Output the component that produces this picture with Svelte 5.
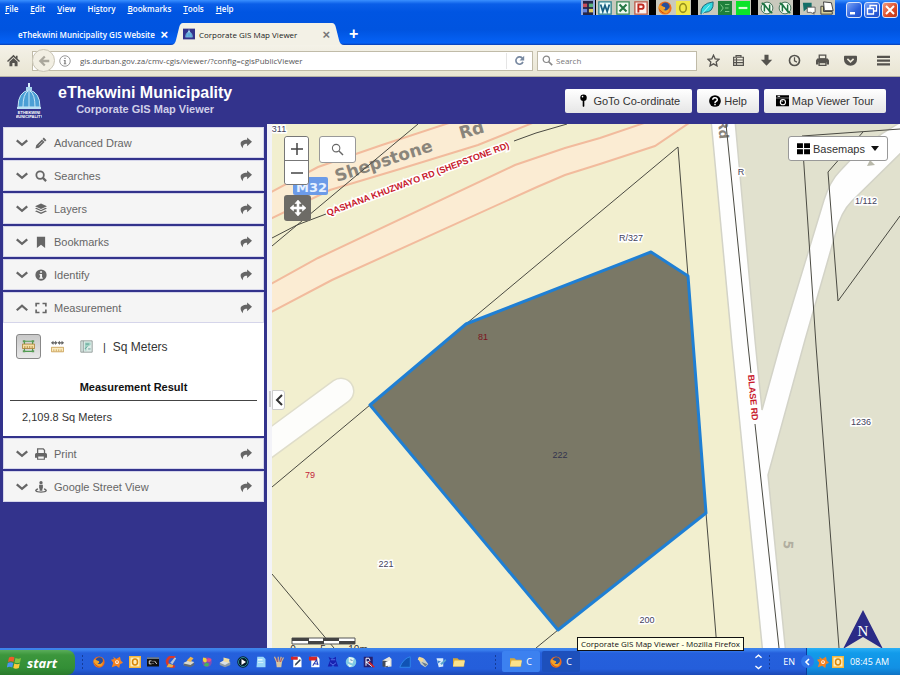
<script>
  const icons = {
    home: '<path d="M8 1 0 8.6l1.2 1.2L8 3.600l6.800 6.200L16 8.600 13 5.800V2h-2v2z"/><path d="M8 5 3 9.600V15h3.600v-4h2.800v4H13V9.600z"/>',
    back: '<path d="M8 2 2 8l6 6 1.800-1.800L7 9.400h7V6.600H7l2.800-2.800z"/>',
    info: '<circle cx="8" cy="8" r="7" fill="none" stroke="currentColor"/><path d="M7.200 3.600h1.600v1.700H7.200zM6.300 6.700h2.500v4.600h1v.9H6.300v-.9h.9V7.600h-.9z"/>',
    reload: '<path d="M12.500 5.200A5.300 5.300 0 1 0 13 10" fill="none" stroke="currentColor" stroke-width="2.400"/><path d="M14.800 1v7H8z"/>',
    lens: '<circle cx="6.300" cy="6.300" r="4.600" fill="none" stroke="currentColor" stroke-width="1.800"/><path d="m9.800 9.800 5 5" stroke="currentColor" stroke-width="2.400"/>',
    thinlens: '<circle cx="6.300" cy="6.300" r="4.600" fill="none" stroke="currentColor" stroke-width="1.300"/><path d="m9.800 9.800 5 5" stroke="currentColor" stroke-width="1.700"/>',
    star: '<path d="m8 1.500 2 4.500 4.900.5-3.600 3.300 1 4.800L8 12.100l-4.300 2.500 1-4.800L1.100 6.500 6 6z" fill="none" stroke="currentColor" stroke-width="1.600"/>',
    list: '<path d="M2 4h12v10H2zM5 4V2h6v2M2 7.400h12M2 10.700h12M5.500 5v9" fill="none" stroke="currentColor" stroke-width="1.500"/>',
    down: '<path d="M5.500 1h5v6H15l-7 7.500L1 7h4.500z"/>',
    clock: '<circle cx="8" cy="8" r="6.200" fill="none" stroke="currentColor" stroke-width="2"/><path d="M8 4v4.500l3 1.500" fill="none" stroke="currentColor" stroke-width="1.500"/>',
    printer: '<path d="M4 1.500h8V6H4z" fill="none" stroke="currentColor" stroke-width="1.600"/><path d="M1.500 5.500h13L16 8v5h-3v-3H3v3H0V8z"/><path d="M3.800 10.500h8.400V14H3.800z" fill="none" stroke="currentColor" stroke-width="1.600"/>',
    pocket: '<path d="M1 2h14a1 1 0 0 1 1 1v4a8 7.500 0 0 1-16 0V3a1 1 0 0 1 1-1z"/><path d="m4.200 6 3.800 3.600L11.800 6" fill="none" stroke="#eeeadb" stroke-width="2"/>',
    menu: '<path d="M0 2h16v2.800H0zM0 6.700h16v2.800H0zM0 11.400h16v2.800H0z"/>',
    pin: '<circle cx="8" cy="4.500" r="4"/><path d="M7 7h2v8l-1 1-1-1z"/><circle cx="6.800" cy="3.300" r="1" fill="#fff"/>',
    help: '<circle cx="8" cy="8" r="7.800"/><path d="M5 6.300a3 2.700 0 1 1 4.200 2.400Q8 9.200 8 10.500" fill="none" stroke="#fff" stroke-width="2"/><path d="M7 11.500h2v2H7z" fill="#fff"/>',
    camera: '<path d="M0 1.500h16v3H0zM0 5.300h16V15H0z"/><path d="M2 2.300h3v1.200H2z" fill="#fff"/><circle cx="8.500" cy="10" r="3.200" fill="none" stroke="#fff" stroke-width="1.300"/><path d="M7 10a1.500 1.500 0 0 1 1.500-1.500" stroke="#fff" fill="none"/>',
    chevdown: '<path d="m1 4.500 7 6 7-6" fill="none" stroke="currentColor" stroke-width="3"/>',
    chevup: '<path d="m1 11 7-6 7 6" fill="none" stroke="currentColor" stroke-width="3"/>',
    share: '<path d="M9.500.5 16 6.300l-6.500 6V9C6 8.800 4 10 3.800 15-1 10-.5 3.800 9.500 3.800z"/>',
    pencil: '<path d="m11.700.8 3.500 3.500-1.700 1.700L10 2.500zM9.300 3.200l3.500 3.500-7.700 7.700L.6 15.400l1-4.500z"/><path d="m5 11.200 5-5" stroke="#f5f5f5" stroke-width=".8"/>',
    search: '<circle cx="6.800" cy="6.800" r="5" fill="none" stroke="currentColor" stroke-width="2.400"/><path d="m10.500 10.500 4.300 4.300" stroke="currentColor" stroke-width="3"/>',
    layers: '<path d="m8 .5 8 3.700-8 3.700L0 4.200z"/><path d="m0 7.300 2-.9 6 2.800 6-2.800 2 .9-8 3.700z"/><path d="m0 10.900 2-.9 6 2.800 6-2.800 2 .9-8 3.700z"/>',
    bookmark: '<path d="M2.500 1h11v15L8 11.500 2.500 16z"/>',
    identify: '<circle cx="8" cy="8" r="7.500"/><path d="M6.800 3h2.600v2H6.800zM6 6.500h3.400v4.700h1V13H5.800v-1.800h1V8.300H6z" fill="#f5f5f5"/>',
    expand: '<path d="M1.500 6V2H6M10 2h4.500v4M14.500 10v4H10M6 14H1.500v-4" fill="none" stroke="currentColor" stroke-width="2.200"/>',
    print: '<path d="M3.500 7V1.200H11L12.700 3v4" fill="none" stroke="currentColor" stroke-width="1.700"/><path d="M2 6.500h12a2 2 0 0 1 2 2V13h-3v-2.500H3V13H0V8.500a2 2 0 0 1 2-2z"/><path d="M3.500 10.500h9V15h-9z" fill="none" stroke="currentColor" stroke-width="1.600"/>',
    street: '<circle cx="8" cy="2.200" r="2.200"/><path d="M5.500 5h5v5H9.800v3H6.200v-3h-.7z"/><path d="M4 10.500C-1 12 .5 14.800 8 14.800s9-2.800 4-4.300" fill="none" stroke="currentColor" stroke-width="1.800"/>',
    area: '<path d="M2 1.500h12M3 1v13M13 1v13M2 14h12" stroke="#4f9e4f" stroke-width="1.400" fill="none"/><path d="M.5 5h15v5.500H.5z" fill="#f4e0a4" stroke="#a87b32"/><path d="M3.500 10V7.500m3 2.500V7.500m3 2.500V7.500m3 2.500V7.500" stroke="#a87b32"/><path d="M1 .3h3v2.500H1zm11 0h3v2.500h-3zM1 12.500h3V15H1zm11 0h3V15h-3z" fill="#5b9a58"/>',
    distance: '<path d="M1 3.500h5.500M9.500 3.500H15" stroke="#555" stroke-width="1.500"/><path d="M3 .8v5.400L0 3.500zm2 0v5.400l3-2.700zm6 0v5.400L8 3.500zm2 0v5.400l3-2.700z" fill="#666"/><path d="M.5 9h15v5.500H.5z" fill="#faebc0" stroke="#c69a4c"/><path d="M3.500 14v-2.500m3 2.500v-2.500m3 2.500v-2.500m3 2.500v-2.500" stroke="#c69a4c"/>',
    location: '<path d="M1 1h14v14H1z" fill="#dcebe7" stroke="#87918f"/><path d="M4 1v14" stroke="#87918f"/><path d="M6 3h7v3L8 9v4H6z" fill="#9ed3c2"/><path d="M6 11l3-3m-2-3h4m-1 6h3" stroke="#538f8b"/>',
    move: '<path d="m8 0 3 3.500H9V7h3.500V5L16 8l-3.500 3V9H9v3.500h2L8 16l-3-3.500h2V9H3.500v2L0 8l3.500-3v2H7V3.500H5z" stroke="currentColor" stroke-width=".6"/>',
    tiles: '<path d="M0 1.500h7.300v6H0zm8.700 0H16v6H8.700zM0 9h7.300v6H0zm8.700 0H16v6H8.700z"/>',
    firefox: '<circle cx="8" cy="8" r="7.500" fill="#ef6c1a"/><circle cx="8.500" cy="6.500" r="4.800" fill="#274f9b"/><path d="M1 5c2-1 4 1 7 2 1 2-1 3-2 3 3 2 6 0 7-3 1 5-3 8-6 7.500C2 14 0 9 1 5z" fill="#f3a229"/><path d="M1 8c1 5 5 7 9 6-5 0-7-3-9-6z" fill="#c9310f"/>',
    avast: '<path d="m3 1 4 3 5-3 1 5 3 3-4 2-1 5-4-3-6 2 2-6-3-4 4-1z" fill="#f58220"/><circle cx="8" cy="8" r="2.500" fill="#fff"/><circle cx="8" cy="8" r="1.200" fill="#f58220"/>',
    outlook: '<path d="M0 0h16v16H0z" fill="#f6b73c"/><path d="M2 2h12v12H2z" fill="#fdebb8"/><ellipse cx="8" cy="8" rx="3.300" ry="4" fill="none" stroke="#d98709" stroke-width="2"/>',
    cmd: '<path d="M0 2h16v12H0z" fill="#111"/><path d="M0 2h16v1.600H0z" fill="#9ab"/><path d="M6 6.500H3v4h3M8 6.500v1m0 2v1m2-4 3 4" fill="none" stroke="#eee" stroke-width="1.200"/>',
    cleaner: '<path d="M13 2a6.500 6.500 0 1 0 0 11" fill="none" stroke="#d8382a" stroke-width="3.600"/><path d="m7 9 6-7 2 1-5 8z" fill="#b8c4d8"/><path d="m5 10 6 2-1 3H2z" fill="#e8b04a"/>',
    scanner: '<path d="m1 9 6-3 8 2-5 5-9-1z" fill="#d9d9cf"/><path d="m1 10 9 2 5-3v3l-5 3-9-2z" fill="#626a73"/><path d="m5 6 5-5 4 2-4 5z" fill="#f2b44a"/>',
    swirl: '<circle cx="8" cy="8" r="6.500" fill="#7a51b8"/><path d="M3 2c5 0 6 4 4 6S1 7 3 2z" fill="#f3d13b"/><path d="M14 4c0 4-4 5-6 3s2-6 6-3z" fill="#e14b8c"/><path d="M4 13c0-4 4-5 6-3s-1 6-6 3z" fill="#45b35e"/>',
    disk: '<path d="m1 9 7-4 7 3v4l-7 3-7-3z" fill="#8d9aa5"/><path d="m1 9 7 3 7-4-7-3z" fill="#d9e0e6"/><path d="m6 2 8 2-1 5-7-2z" fill="#f0dca0"/>',
    play: '<circle cx="8" cy="8" r="7.600" fill="#061826"/><circle cx="8" cy="8" r="6" fill="none" stroke="#37adbd"/><path d="m6 4 6 4-6 4z" fill="#fff"/>',
    note: '<path d="M3 1h8l3 3v11H2z" fill="#9bd8fb"/><path d="M4 4h6v2H4zm0 4h7v1H4z" fill="#e4f6ff"/>',
    brushes: '<path d="M4 8h8l-1 7H5z" fill="#d8c5a0"/><path d="m5 8-3-7m5 7V1m2 7 2-7m0 7 3-6" stroke="#d9b48a" stroke-width="1.600"/><path d="m6 8-1-5m5 5 1-5" stroke="#d44c35"/>',
    pdf: '<path d="M3 1h9l2 3v11H3z" fill="#fff"/><path d="M0 1h11v5H0z" fill="#d72626"/><path d="m5 13 5-8 2 7M6 10l6 1" fill="none" stroke="#2a3fb5" stroke-width="1.500"/>',
    pdfedit: '<path d="M3 1h9l2 3v11H3z" fill="#fff"/><path d="M0 1h9v4H0z" fill="#d72626"/><path d="m5 13 1-3 6-6 1 2-6 6z" fill="#345"/>',
    gear: '<path d="m2 1 5 3 5-3v5l3 8h-5l-2-2-2 2H1l3-8z" fill="#1722b2"/><path d="m4 9 4 3 4-3M5 5h6" stroke="#6a87f8" fill="none"/>',
    globe: '<circle cx="8" cy="8" r="7" fill="#81cbe5"/><path d="m5 1 7 2-2 7-5-2zM3 10l7 3-4 2z" fill="#e7f5f4"/><path d="m7 5 3 1" stroke="#27639f"/>',
    app: '<path d="M1 1h12v14H1z" fill="#26206f"/><path d="M4 13V3h4q3 3-1 5H4l8 6" fill="none" stroke="#fff" stroke-width="1.300"/><path d="m8 8 7 7" stroke="#d22" stroke-width="2"/>',
    papers: '<path d="m2 6 9-5 3 3v10l-9 1z" fill="#e7e5dc"/><path d="m2 6 7 1v8l-7-1z" fill="#444b59"/><path d="m6 8 6-2v6l-6 2z" fill="#fff"/>',
    fin: '<path d="M15 1v14H1Q6 3 15 1z" fill="#1053b4"/><path d="M15 1v14H1Q6 3 15 1z" fill="none" stroke="#3493f4"/>',
    tools: '<path d="m1 2 9 2 5 7-4 4-6-4z" fill="#c9cec5"/><path d="m3 1 6 2-2 5-6-3z" fill="#f4d893"/><path d="m6 8 8 3-3 3z" fill="#677a8c"/>',
    writer: '<path d="M2 3h9v11l-6 1z" fill="#d9eafa"/><path d="m7 10 7-6 1 2-6 6z" fill="#58a5ce"/><path d="m3 6 5 1-4 3z" fill="#488bd1"/>',
    folder: '<path d="M0 3h6l2 2h7v9H0z" fill="#d9a836"/><path d="M2 6h14l-2 8H0z" fill="#fbe28c"/>',
    grid: '<path d="M0 0h16v16H0z" fill="#252547"/><path d="M2 3h5v4H2z" fill="#c84d5a"/><path d="M9 3h5v4H9z" fill="#5bb27e"/><path d="M2 9h5v4H2z" fill="#6784dd"/><path d="M9 9h5v4H9z" fill="#e0c95d"/>',
    word: '<path d="M1 1h14v14H1z" fill="#eafcfc" stroke="#2b7f8c" stroke-width="1.500"/><path d="m3 4 2.500 8L8 5l2.500 7L13 4" fill="none" stroke="#195f83" stroke-width="2"/>',
    excel: '<path d="M1 1h14v14H1z" fill="#effaf0" stroke="#3b8855" stroke-width="1.500"/><path d="m4 4 8 8m0-8-8 8" stroke="#257744" stroke-width="2.400"/>',
    power: '<path d="M1 1h14v14H1z" fill="#fdf1ed" stroke="#b95a49" stroke-width="1.500"/><path d="M5 13V4h3.500a2.300 2.300 0 0 1 0 5H5" fill="none" stroke="#be2a20" stroke-width="2.200"/>',
    ring: '<path d="M0 0h16v16H0z" fill="#f1e84a"/><ellipse cx="8" cy="8" rx="3.800" ry="5" fill="none" stroke="#98911c" stroke-width="1.800"/>',
    leaf: '<path d="M1 15Q0 3 15 1q1 12-10 12z" fill="#32d7e0" stroke="#125b70"/><path d="m2 15 9-10" stroke="#c1ffff"/>',
    board: '<path d="M0 0h16v16H0z" fill="#1e803c"/><path d="m3 4 3 4-3 4m5-8h5M8 8h4m-4 4h5" fill="none" stroke="#8ad293"/>',
    green: '<path d="M0 0h16v16H0z" fill="#0be42a"/><path d="M3 8h10" stroke="#d5ffd5" stroke-width="2.500"/>',
    compass: '<circle cx="8" cy="8" r="6.700" fill="#f3fbf3" stroke="#34664d"/><path d="M5 12V4l6 8V4M2 2l12 12" fill="none" stroke="#1b7443" stroke-width="1.700"/>',
    chat: '<path d="M1 2h10v7H5l-3 3z" fill="#146f68"/><path d="M6 7h9v6h-2l1 2-4-2H6z" fill="#fff" stroke="#555"/>',
    sheets: '<path d="m4 1 9 1 2 9H5z" fill="#fff" stroke="#333"/><path d="M1 6h3v6h10v3H1z" fill="#d6d09a" stroke="#333"/>'
  };

  const menus = ['File', 'Edit', 'View', 'History', 'Bookmarks', 'Tools', 'Help'];
  const keyAt = [0, 0, 0, 2, 0, 0, 0];
  const launchers = [['grid'], ['word', 'excel', 'power'], ['firefox', 'ring'], ['leaf', 'board', 'green'], ['compass', 'compass'], ['chat', 'sheets']];
  const tools = ['list', 'down', 'clock', 'printer', 'pocket'];
  const toolNames = ['Bookmarks list', 'Downloads', 'Recent history', 'Print page', 'Save to Pocket'];
  const top = [['pencil', 'Advanced Draw'], ['search', 'Searches'], ['layers', 'Layers'], ['bookmark', 'Bookmarks'], ['identify', 'Identify']];
  const bottom = [['print', 'Print'], ['street', 'Google Street View']];
  const quick = ['firefox', 'avast', 'outlook', 'cmd', 'cleaner', 'scanner', 'swirl', 'disk', 'play', 'note', 'brushes', 'pdfedit', 'pdf', 'gear', 'globe', 'app', 'papers', 'fin', 'tools', 'writer', 'folder'];
  let url = $state('gis.durban.gov.za/cmv-cgis/viewer/?config=cgisPublicViewer');
</script>

{#snippet icon(name, size = 12)}
  <svg class="icon" width={size} height={size} viewBox="0 0 16 16" fill="currentColor" aria-hidden="true">{@html icons[name]}</svg>
{/snippet}

{#snippet dome()}
  <path d="M12 0h2v4h-2z" fill="#d9eefa" />
  <path d="M10 4h6v4h-6z" fill="#a8d6ef" />
  <path d="M2 24Q2 9 13 7q11 2 11 17z" fill="#4b9fd5" stroke="#c6e5f6" />
  <path d="M7 24q0-13 5-16m7 16q0-13-5-16m-1 0v16" fill="none" stroke="#c6e5f6" />
{/snippet}

{#snippet pane(glyph, label, open = false)}
  <div class="pane-head">
    <button class="toggle" aria-expanded={open}>
      {@render icon(open ? 'chevup' : 'chevdown', 12)}
      {@render icon(glyph, 12)}
      <span>{label}</span>
    </button>
    <button class="pop" aria-label={`Detach ${label}`}>{@render icon('share', 12)}</button>
  </div>
{/snippet}

<div class="screen">
  <div class="chrome">
    <div class="menubar">
      <nav>
        {#each menus as m, i}
          <button>{m.slice(0, keyAt[i])}<u>{m[keyAt[i]]}</u>{m.slice(keyAt[i] + 1)}</button>
        {/each}
      </nav>
      <div class="launchbar">
        {#each launchers as group}
          <div class="group">
            {#each group as g}<button aria-label={g}>{@render icon(g, 14)}</button>{/each}
          </div>
        {/each}
      </div>
      <div class="winbtns">
        <button aria-label="Minimise"><svg width="12" height="12" viewBox="0 0 12 12"><path d="M2 8h5v2.500H2z" fill="#fff" /></svg></button>
        <button aria-label="Restore"><svg width="12" height="12" viewBox="0 0 12 12"><path d="M4 4V1.500h6.500V7H8M1.500 4.500H7.500V10h-6z" fill="none" stroke="#fff" stroke-width="1.300" /></svg></button>
        <button class="close" aria-label="Close"><svg width="12" height="12" viewBox="0 0 12 12"><path d="m2 2 8 8m0-8-8 8" stroke="#fff" stroke-width="2" /></svg></button>
      </div>
    </div>
    <div class="tabs">
      <div class="tab idle"><a href="#site">eThekwini Municipality GIS Website</a><button aria-label="Close tab">×</button></div>
      <div class="tab active">
        <svg class="curve left" width="12" height="22" viewBox="0 0 12 22"><path d="M0 22Q4 22 5 17L8 5q1-5 4-5v22z" fill="#f3f1e6" /></svg>
        <svg width="12" height="12" viewBox="-6 -3 38 34"><path d="M-6-3h38v34H-6z" fill="#33338c" />{@render dome()}</svg>
        <a href="#viewer">Corporate GIS Map Viewer</a><button aria-label="Close tab">×</button>
        <svg class="curve right" width="12" height="22" viewBox="0 0 12 22"><path d="M12 22Q8 22 7 17L4 5Q3 0 0 0v22z" fill="#f3f1e6" /></svg>
      </div>
      <button class="newtab" aria-label="New tab">+</button>
    </div>
  </div>

  <div class="toolbar">
    <button class="home" aria-label="Home">{@render icon('home', 13)}</button>
    <div class="address">
      <button class="back" aria-label="Back">{@render icon('back', 14)}</button>
      <button class="site" aria-label="Site information">{@render icon('info', 12)}</button>
      <input class="url" aria-label="Address" bind:value={url} />
      <button class="reload" aria-label="Reload">{@render icon('reload', 11)}</button>
    </div>
    <label class="find">{@render icon('lens', 11)}<input aria-label="Search" placeholder="Search" /></label>
    <button class="tool star" aria-label="Bookmark this page">{@render icon('star', 13)}</button>
    {#each tools as t, i}
      <button class="tool" aria-label={toolNames[i]}>{@render icon(t, 13)}</button>
    {/each}
    <button class="tool burger" aria-label="Open menu">{@render icon('menu', 13)}</button>
  </div>

  <header>
    <svg class="logo" width="26" height="36" viewBox="0 0 26 36" aria-hidden="true">
      {@render dome()}
      <path d="M1 24h24v2H1z" fill="#b9dff3" />
      <text x="13" y="31">ETHEKWINI</text>
      <text x="13" y="35">MUNICIPALITY</text>
    </svg>
    <div class="titles">
      <h1>eThekwini Municipality</h1>
      <p>Corporate GIS Map Viewer</p>
    </div>
    <div class="actions">
      <button>{@render icon('pin', 13)}GoTo Co-ordinate</button>
      <button>{@render icon('help', 12)}Help</button>
      <button>{@render icon('camera', 13)}Map Viewer Tour</button>
    </div>
  </header>

  <main>
    <aside>
      {#each top as [g, l]}<section>{@render pane(g, l)}</section>{/each}
      <section>
        {@render pane('expand', 'Measurement', true)}
        <div class="measure">
          <div class="modes">
            <button class="on" aria-label="Area" aria-pressed="true">{@render icon('area', 13)}</button>
            <button aria-label="Distance">{@render icon('distance', 13)}</button>
            <button aria-label="Location">{@render icon('location', 13)}</button>
            <span>|</span>
            <button class="unit" aria-haspopup="menu">Sq Meters</button>
          </div>
          <h2>Measurement Result</h2>
          <output>2,109.8 Sq Meters</output>
        </div>
      </section>
      {#each bottom as [g, l]}<section>{@render pane(g, l)}</section>{/each}
    </aside>
    <div class="splitter"><i></i></div>

    <div class="map">
      <svg class="canvas" viewBox="272 124 628 524" preserveAspectRatio="xMinYMin slice" role="img" aria-label="Parcel map">
        <path d="M272 124h628v524H272z" fill="#f2efcf" />
        <path d="M724 124h176v524H774z" fill="#e1e1ce" />
        <g fill="#fbecd3" stroke="#f2bb9d" stroke-width="2">
          <path d="M262 197 318 167 382 145 452 122H535L478 145 400 169 330 190 262 223z" />
          <path d="M262 289 318 258 515 165 565 148 600 138 650 121H692L655 146 600 164 565 175 537 187 332 280 262 317z" />
        </g>
        <path d="M262 449 341 391" stroke="#dfddca" stroke-width="27" stroke-linecap="round" />
        <path d="M262 449 341 391" stroke="#fdfdfb" stroke-width="24" stroke-linecap="round" />
        <path d="M711 120 732 345 763 655H786L768 475 805 340 836 232Q841 212 852 201L905 149V120Q868 139 840 171 830 181 824 200L780 345 762 410 755 340 735 120z" fill="#fefefe" stroke="#d3d3c7" stroke-width="1.500" />
        <g class="gray">
          <text font-size="17" transform="translate(337 182) rotate(-18)">Shepstone</text>
          <text font-size="17" transform="translate(461 139) rotate(-16)">Rd</text>
          <text font-size="13" transform="translate(718 120) rotate(85)">Rd</text>
          <text font-size="13" opacity=".55" transform="translate(784 540) rotate(94)">5</text>
        </g>
        <rect x="293" y="177" width="35" height="18" rx="2" fill="#6c9be8" />
        <text class="route" x="296" y="192">M32</text>
        <path d="M867 166l3-6 5 5z" fill="#b9b9aa" />
        <path d="M370 405 466 324 651 252 688 276 706 513 558 630z" fill="#7a7866" />
        <g class="lines">
          <path d="M272 246 418 124M272 238 297 225 326 214M514 141l22-8 31-9" />
          <path d="M466 324 678 147 688 276 706 513 717 648M272 487 370 405M272 574 334 648M536 648 558 630" />
          <path d="M726 124 748 345 751 373M755 424 779 648M802 136 816 345 839 648M802 136 900 129M863 132 828 172 838 301 900 216" />
        </g>
        <path d="M370 405 466 324 651 252 688 276 706 513 558 630z" fill="none" stroke="#1f7fd4" stroke-width="3" stroke-linejoin="round" />
        <g class="street">
          <text transform="translate(328 216) rotate(-20.600)">QASHANA KHUZWAYO RD (SHEPSTONE RD)</text>
          <text transform="translate(748 375) rotate(85)">BLASE RD</text>
        </g>
        <g class="lot">
          <text x="279" y="132">311</text>
          <text x="631" y="241">R/327</text>
          <text x="741" y="175">R</text>
          <text x="866" y="204">1/112</text>
          <text x="861" y="425">1236</text>
          <text x="386" y="567">221</text>
          <text x="647" y="623">200</text>
          <text class="bare" x="560" y="458">222</text>
          <text class="bare dark" x="483" y="340">81</text>
          <text class="bare red" x="310" y="478">79</text>
        </g>
        <path d="M292 638h63v6h-63z" fill="#fff" stroke="#555" />
        <path d="M292 638h17v3h-17zM323 638h16v3h-16zM308 641h16v3h-16zM339 641h16v3h-16z" fill="#444" />
        <g class="scale"><text x="293" y="653">0</text><text x="323" y="653">5</text><text x="358" y="653">10m</text></g>
        <path d="M863 610 883 649 863 637 843 649z" fill="#2b2b86" />
        <text class="north" x="863" y="636">N</text>
      </svg>

      <div class="zoom">
        <button aria-label="Zoom in"><svg width="12" height="12"><path d="M6 0v12M0 6h12" stroke="#444" stroke-width="1.500" /></svg></button>
        <button aria-label="Zoom out"><svg width="12" height="12"><path d="M0 6h12" stroke="#444" stroke-width="1.500" /></svg></button>
      </div>
      <button class="lookup" aria-label="Find place">{@render icon('thinlens', 13)}</button>
      <button class="extent" aria-label="Full extent">{@render icon('move', 16)}</button>
      <button class="basemaps" aria-haspopup="menu">{@render icon('tiles', 13)}Basemaps<i class="caret"></i></button>
      <button class="collapse" aria-label="Collapse sidebar"><svg width="8" height="12" viewBox="0 0 8 12"><path d="M7 1 2 6l5 5" fill="none" stroke="#333" stroke-width="2" /></svg></button>
    </div>
  </main>

  <footer>
    <button class="start">
      <svg width="16" height="14" viewBox="0 0 16 14" aria-hidden="true">
        <path d="M2 1.500q3-1.500 5.500 0L6.500 6Q4 4.600 1 6z" fill="#ef5b2b" /><path d="M8.500 2q3 1.400 5.500 0l-1 4.500q-3 1.200-5.500 0z" fill="#86c440" />
        <path d="M.8 7q3-1.400 5.500 0l-1 4.500q-3-1.500-5.500 0z" fill="#4a95ee" /><path d="M7.300 7.500q3 1.400 5.500 0l-1 4.500q-3 1.400-5.500 0z" fill="#fbcb3a" />
      </svg>
      start
    </button>
    <i class="grip"></i>
    <div class="quick">{#each quick as q}<button aria-label={q}>{@render icon(q, 12)}</button>{/each}</div>
    <i class="grip"></i>
    <button class="task">{@render icon('folder', 12)}C</button>
    <button class="task pressed">{@render icon('firefox', 12)}C</button>
    <div class="scroller"><button aria-label="Scroll up">{@render icon('chevup', 7)}</button><button aria-label="Scroll down">{@render icon('chevdown', 7)}</button></div>
    <i class="grip"></i>
    <span class="lang">EN</span>
    <div class="tray">
      <button class="hide" aria-label="Hide icons"><svg width="6" height="8" viewBox="0 0 6 8"><path d="M5 1 2 4l3 3" fill="none" stroke="#fff" stroke-width="1.600" /></svg></button>
      {@render icon('avast', 12)}{@render icon('outlook', 12)}
      <time>08:45 AM</time>
    </div>
    <div class="tip" role="tooltip">Corporate GIS Map Viewer - Mozilla Firefox</div>
  </footer>
</div>

<style>
  :global(body) { margin: 0; }
  .screen { min-height: 100vh; display: flex; flex-direction: column; font-family: "Liberation Sans", Arial, sans-serif; font-size: 11px; overflow: hidden; }
  button { font: inherit; color: inherit; border: 0; background: none; padding: 0; margin: 0; display: flex; align-items: center; justify-content: center; flex: none; }
  a { color: inherit; text-decoration: none; }
  .icon { display: block; flex: none; }
  .chrome, .toolbar, footer { font-family: "Open Sans", "Noto Sans", sans-serif; font-size: 8px; }

  .chrome { background: linear-gradient(#3a90ff 0, #0a5ee8 4px, #0055e2 12px, #0054e0 30px, #0562f6 43px, #0a3eb0 45px); height: 45px; display: flex; flex-direction: column; justify-content: space-between; }
  .menubar { display: flex; height: 17px; color: #fff; }
  nav { display: flex; flex: 1; gap: 12px; padding-left: 5px; font-size: 8px; font-weight: 600; height: 16px; }
  .launchbar { display: flex; height: 15px; gap: 7px; background: linear-gradient(90deg, #93a8df 14px, #000 14px); padding-left: 2px; }
  .group { display: flex; gap: 1px; background: #c9c9bd; }
  .group button { width: 17px; }
  .group:first-child button { width: 10px; overflow: hidden; background: #8d9cc8; }
  .group:first-child { margin-right: -4px; }
  .winbtns { display: flex; gap: 2px; padding: 2px 2px 0 11px; }
  .winbtns button { width: 16px; height: 16px; box-sizing: border-box; border: 1px solid #d8e4fb; border-radius: 3px; background: linear-gradient(135deg, #7ba4f5, #2a5fdc 60%, #1f4cc4); }
  .winbtns .close { background: linear-gradient(135deg, #f19a7f, #dd4a26 60%, #b9361a); }

  .tabs { display: flex; height: 22px; align-items: stretch; }
  .tab { display: flex; align-items: center; position: relative; }
  .tab a { flex: 1; white-space: nowrap; }
  .tab button { font: bold 13px "Liberation Sans", sans-serif; }
  .idle { width: 150px; padding: 0 8px 0 18px; color: #fff; font-weight: 600; }
  .active { width: 147px; background: #f3f1e6; color: #222; gap: 4px; margin-left: 7px; padding: 0 2px 0 0; }
  .active button { color: #777; }
  .curve { position: absolute; top: 0; }
  .left { right: 100%; }
  .right { left: 100%; }
  .newtab { margin-left: 17px; color: #fff; font: bold 16px "Liberation Sans", sans-serif; }

  .toolbar { display: flex; align-items: center; height: 32px; box-sizing: border-box; padding: 0 9px 0 7px; color: #55534e; background: linear-gradient(#f4f2e8, #e9e5d3); border-bottom: 1px solid #b5b1a5; }
  .home { margin-right: 12px; }
  .address { display: flex; flex: 1; height: 18px; border: 1px solid #c0bba8; background: #fff; align-items: center; margin-right: 4px; }
  .back { width: 23px; height: 23px; border: 1px solid #c9c5b6; border-radius: 50%; background: #f2efe3; color: #aaa79c; margin-left: -1px; }
  .site { padding: 0 9px 0 4px; color: #777; }
  .url { flex: 1; color: #555; }
  input { border: 0; outline: 0; padding: 0; background: none; font: inherit; font-size: 8px; min-width: 0; }
  input::placeholder { color: #777; opacity: 1; }
  .reload { width: 26px; border-left: 1px solid #e5e5e5; height: 16px; color: #7788a0; }
  .find { display: flex; align-items: center; gap: 3px; width: 154px; height: 18px; border: 1px solid #c0bba8; background: #fff; padding-left: 4px; color: #888; margin-right: 9px; }
  .find input { flex: 1; }
  .tool { width: 15px; margin-right: 13px; }
  .star { margin-right: 10px; }
  .burger { margin: 0 0 0 5px; }

  header { display: flex; align-items: center; height: 47px; background: #33338c; color: #fff; padding: 0 14px 0 16px; }
  .logo { flex: none; }
  .logo text { font-size: 4px; font-weight: bold; fill: #fff; text-anchor: middle; }
  .titles { text-align: center; margin-left: 16px; flex: none; }
  h1 { font-size: 16px; line-height: 18px; margin: 0; }
  p { margin: 0; font-size: 11px; line-height: 15px; font-weight: bold; color: #cfcfe8; }
  .actions { display: flex; gap: 5px; margin-left: auto; }
  .actions button { height: 24px; padding: 0 12px; gap: 3px; color: #333; font-size: 11px; background: linear-gradient(#fff, #e6e6e6); border-radius: 2px; }
  .actions .icon { color: #000; }

  main { flex: 1; display: flex; background: #33338c; min-height: 0; }
  aside { width: 261px; flex: none; padding: 3px 3px 0; display: flex; flex-direction: column; gap: 2px; }
  section { background: #fff; }
  .pane-head { display: flex; align-items: center; height: 31px; background: #f5f5f5; border: 1px solid #d5d5ea; box-sizing: border-box; padding: 0 11px 0 12px; color: #666; }
  .toggle { flex: 1; justify-content: flex-start; gap: 7px; }
  .measure { padding: 9px 7px 11px; }
  .modes { display: flex; align-items: center; height: 29px; padding-left: 6px; color: #333; font-size: 12px; }
  .modes button { width: 25px; height: 25px; box-sizing: border-box; margin-right: 4px; }
  .modes .on { background: linear-gradient(#c9c9c9, #e8e8e8); border: 1px solid #888; border-radius: 3px; }
  .modes .unit { width: auto; margin: 0 0 0 7px; }
  .modes span { font-size: 11px; }
  h2 { margin: 14px 0 0; font-size: 11px; line-height: 24px; padding-bottom: 1px; text-align: center; border-bottom: 1px solid #444; color: #111; }
  output { display: block; padding: 8px 0 0 12px; line-height: 16px; color: #333; }
  .splitter { width: 5px; background: #f3f3f8; display: flex; align-items: center; flex: none; }
  .splitter i { width: 2px; height: 16px; margin: 26px 0 0 2px; background: #ccc; }

  .map { flex: 1; position: relative; overflow: hidden; background: #f2efcf; min-width: 0; }
  .canvas { position: absolute; inset: 0; width: 100%; height: 100%; }
  .gray { fill: #8a857b; font-family: "DejaVu Sans", sans-serif; font-weight: bold; }
  .route { fill: #e6f0ff; font: bold 13px "DejaVu Sans", sans-serif; }
  .lines { fill: none; stroke: #4a4a42; stroke-width: 1; }
  .street { fill: #c81a2c; stroke: #fff; stroke-width: 3; paint-order: stroke; font: bold 9px "Liberation Sans", sans-serif; }
  .lot { fill: #44425c; stroke: #fff; stroke-width: 3; paint-order: stroke; text-anchor: middle; font-size: 9px; }
  .lot .bare { stroke: none; fill: #33334e; }
  .lot .dark { fill: #7c1420; }
  .lot .red { fill: #c2233a; }
  .scale { font-size: 10px; fill: #333; text-anchor: middle; }
  .north { font: 15px "Liberation Serif", serif; fill: #fff; text-anchor: middle; }

  .map button { position: absolute; box-sizing: border-box; background: #fff; border: 1px solid #999; border-radius: 3px; }
  .zoom { position: absolute; left: 12px; top: 12px; width: 25px; background: #fff; border: 1px solid #777; border-radius: 3px; box-sizing: border-box; }
  .map .zoom button { position: static; width: 100%; height: 23px; border: 0; }
  .map .zoom button + button { border-top: 1px solid #777; border-radius: 0 0 3px 3px; height: 24px; }
  .map .lookup { left: 47px; top: 12px; width: 37px; height: 27px; color: #666; }
  .map .extent { left: 12px; top: 71px; width: 27px; height: 26px; background: #6d6b66; border: 0; color: #fff; }
  .map .basemaps { right: 12px; top: 12px; height: 25px; padding: 0 8px; gap: 3px; color: #333; }
  .basemaps .icon { color: #000; }
  .caret { border: 4px solid transparent; border-top: 5px solid #111; border-bottom: 0; margin-left: 3px; }
  .map .collapse { left: 0; top: 266px; width: 13px; height: 20px; border-color: #ccc; border-radius: 0 3px 3px 0; }

  footer { position: relative; display: flex; align-items: center; height: 27px; color: #fff; background: linear-gradient(#3f83e8 0, #3a80ee 2px, #2560dc 5px, #245edb 21px, #1c48b4 27px); }
  .start { width: 75px; height: 25px; margin-top: 2px; gap: 4px; justify-content: flex-start; padding-left: 7px; box-sizing: border-box; background: linear-gradient(#5aad5a, #3c963c 5px, #338f36 18px, #2a7a2c); border-radius: 0 8px 8px 0; font: italic bold 13px "Open Sans", sans-serif; }
  .grip { width: 3px; height: 16px; margin: 0 6px; background: radial-gradient(circle, #153b98 1px, transparent 1px) 0 0 / 3px 4px; flex: none; }
  .quick { display: flex; gap: 6px; margin-left: 3px; flex: none; }
  .quick + .grip { margin-left: 29px; margin-right: 5px; }
  .task { width: 38px; height: 21px; gap: 4px; margin-right: 2px; background: #3c81f0; border-radius: 2px; font-size: 9px; }
  .pressed { background: #1d50bc; }
  .scroller { margin-left: auto; display: flex; flex-direction: column; gap: 4px; }
  .lang { font-size: 9px; margin: 0 11px 0 6px; }
  .tray { display: flex; align-items: center; align-self: stretch; gap: 3px; background: linear-gradient(#2bb0f6, #129bea 5px, #1290e4 20px, #0f73c4); padding-right: 11px; border-left: 1px solid #0d3c9c; }
  .tray time { margin-left: 3px; font-size: 9px; }
  .hide { width: 13px; height: 13px; border-radius: 50%; background: #2f76ea; margin-left: -6px; }
  .tip { position: absolute; left: 577px; bottom: 24px; padding: 0 3px; line-height: 12px; white-space: nowrap; color: #111; background: #ffffe4; border: 1px solid #111; }
</style>
